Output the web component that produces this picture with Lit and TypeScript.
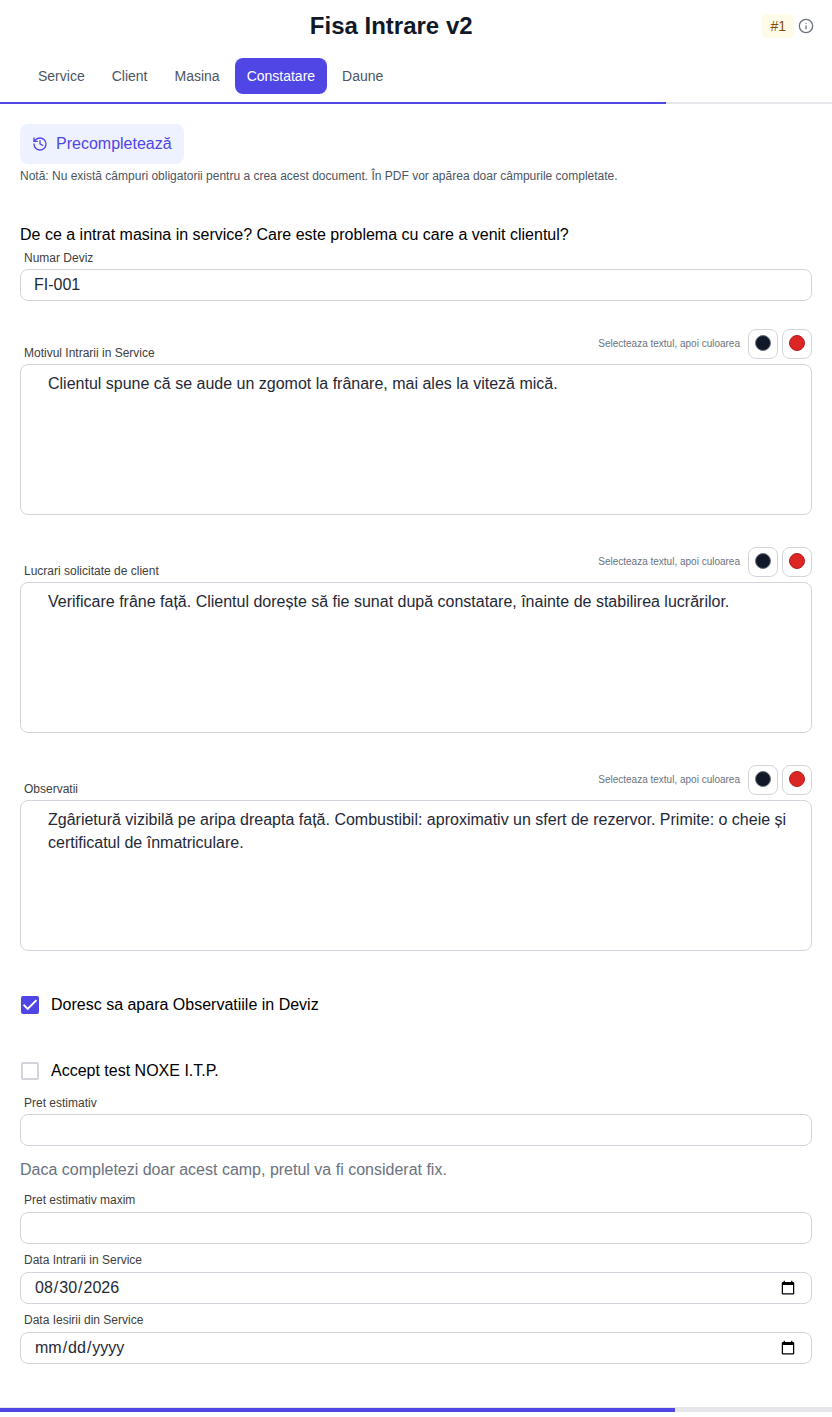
import { LitElement, html, css } from "lit";
import { customElement, property, state } from "lit/decorators.js";

@customElement("color-note")
class ColorNote extends LitElement {
  @property() label = "";
  @property() value = "";

  static styles = css`
    :host { display: block; }
    * { box-sizing: border-box; }
    .head { display: flex; justify-content: space-between; align-items: flex-end; }
    label { font-size: 12px; line-height: 16px; color: #404040; padding-left: 4px; margin-bottom: -2px; }
    .tools { display: flex; align-items: center; gap: 4px; }
    .hint { font-size: 10px; line-height: 16px; color: #6b7280; margin-right: 4px; }
    button { width: 30px; height: 30px; padding: 0 0 2px; display: grid; place-items: center; background: #fff; border: 1px solid #d1d5db; border-radius: 8px; }
    .dot { width: 16px; height: 16px; border-radius: 50%; border: 1px solid; }
    .dark { background: #111827; border-color: #6b7280; }
    .red { background: #dc2626; border-color: #b91c1c; }
    textarea { display: block; width: 100%; height: 151px; margin-top: 5px; padding: 7px 12px 7px 27px; border: 1px solid #d1d5db; border-radius: 8px; font: 16px/23px "Liberation Sans", Arial, sans-serif; color: #1f2937; resize: none; outline: none; background: #fff; }
  `;

  render() {
    return html`
      <div class="head">
        <label for="text">${this.label}</label>
        <div class="tools">
          <span class="hint">Selecteaza textul, apoi culoarea</span>
          <button type="button" aria-label="Negru"><span class="dot dark"></span></button>
          <button type="button" aria-label="Rosu"><span class="dot red"></span></button>
        </div>
      </div>
      <textarea id="text" .value=${this.value}></textarea>
    `;
  }
}

@customElement("app-root")
class AppRoot extends LitElement {
  @state() private active = "Constatare";
  private tabs = ["Service", "Client", "Masina", "Constatare", "Daune"];

  static styles = css`
    :host { display: block; background: #fff; color: #000; font-family: "Liberation Sans", Arial, sans-serif; font-size: 16px; line-height: 24px; }
    * { box-sizing: border-box; }
    header { display: grid; grid-template-columns: 1fr auto; align-items: center; height: 52px; padding: 0 18px 0 20px; }
    h1 { margin: 0; font-size: 24px; line-height: 32px; text-align: center; color: #111827; }
    .status { display: flex; align-items: center; gap: 4px; }
    .badge { padding: 2px 8px; border-radius: 4px; background: #fefce8; color: #854d0e; font-size: 14px; line-height: 20px; }
    .info { display: grid; padding: 0; border: 0; background: none; color: #6b7280; }
    nav { display: flex; gap: 3px; padding: 6px 26px 8px; }
    .tab { padding: 8px 12px; border: 0; border-radius: 8px; background: none; font: 14px/20px "Liberation Sans", Arial, sans-serif; color: #4b5563; }
    .tab.on { background: #4f46e5; color: #fff; }
    .bar { height: 2px; background: #e5e7eb; }
    .bar.thick { height: 5px; border-top: 1px solid #e5e7eb; }
    .fill { height: 100%; background: #4f46e5; }
    main { display: block; padding: 20px 20px 43px; }
    .prefill { display: inline-flex; align-items: center; gap: 8px; height: 40px; padding: 0 12px; border: 0; border-radius: 8px; background: #eef2ff; color: #4f46e5; font: 16px/24px "Liberation Sans", Arial, sans-serif; }
    .note { margin: 4px 0 0; font-size: 12px; line-height: 16px; color: #4b5563; }
    h2 { margin: 39px 0 3px; font-size: 16px; line-height: 24px; font-weight: 400; }
    .field { display: flex; flex-direction: column; gap: 3px; }
    .field label { padding-left: 4px; font-size: 12px; line-height: 16px; color: #404040; }
    .field input { width: 100%; height: 32px; padding: 0 13px; border: 1px solid #d1d5db; border-radius: 8px; background: #fff; color: #1f2937; font: 16px/24px "Liberation Sans", Arial, sans-serif; outline: none; }
    .notes { display: flex; flex-direction: column; gap: 32px; margin-top: 28px; }
    .check { display: flex; align-items: center; gap: 12px; height: 24px; }
    .check input { appearance: none; width: 18px; height: 18px; margin: 0 0 0 1px; border: 2px solid #d1d5db; border-radius: 2px; background: #fff; }
    .check input:checked { border-color: #4f46e5; background: #4f46e5 url("data:image/svg+xml,%3Csvg xmlns='http://www.w3.org/2000/svg' viewBox='0 0 18 18'%3E%3Cpath d='M2.5 8.7 6.7 12.9 15.5 4.1' fill='none' stroke='white' stroke-width='2'/%3E%3C/svg%3E") center / 18px 18px no-repeat border-box; }
    .checks { display: flex; flex-direction: column; gap: 42px; margin: 42px 0 12px; }
    .hint { margin: 12px 0 10px; color: #6b7280; }
    .stack { display: flex; flex-direction: column; gap: 8px; }
    .stack .field { gap: 4px; }
  `;

  private field(id: string, label: string, type = "text", value = "") {
    return html`<div class="field"><label for=${id}>${label}</label><input id=${id} type=${type} .value=${value} /></div>`;
  }

  render() {
    return html`
      <header>
        <h1>Fisa Intrare v2</h1>
        <div class="status">
          <span class="badge">#1</span>
          <button class="info" type="button" aria-label="Informatii">
            <svg width="16" height="16" viewBox="0 0 24 24" fill="none" stroke="currentColor" stroke-width="2" stroke-linecap="round"><circle cx="12" cy="12" r="10" /><path d="M12 16v-4M12 8h.01" /></svg>
          </button>
        </div>
      </header>
      <nav>
        ${this.tabs.map((t) => html`<button type="button" class="tab ${t === this.active ? "on" : ""}" @click=${() => (this.active = t)}>${t}</button>`)}
      </nav>
      <div class="bar"><div class="fill" style="width:80%"></div></div>
      <main>
        <button class="prefill" type="button">
          <svg width="16" height="16" viewBox="0 0 24 24" fill="none" stroke="currentColor" stroke-width="2" stroke-linecap="round" stroke-linejoin="round"><path d="M3 12a9 9 0 1 0 9-9 9.75 9.75 0 0 0-6.74 2.74L3 8" /><path d="M3 3v5h5M12 7v5l4 2" /></svg>
          Precompletează
        </button>
        <p class="note">Notă: Nu există câmpuri obligatorii pentru a crea acest document. În PDF vor apărea doar câmpurile completate.</p>
        <h2>De ce a intrat masina in service? Care este problema cu care a venit clientul?</h2>
        ${this.field("deviz", "Numar Deviz", "text", "FI-001")}
        <div class="notes">
          <color-note label="Motivul Intrarii in Service" value="Clientul spune că se aude un zgomot la frânare, mai ales la viteză mică."></color-note>
          <color-note label="Lucrari solicitate de client" value="Verificare frâne față. Clientul dorește să fie sunat după constatare, înainte de stabilirea lucrărilor."></color-note>
          <color-note label="Observatii" value="Zgârietură vizibilă pe aripa dreapta față. Combustibil: aproximativ un sfert de rezervor. Primite: o cheie și certificatul de înmatriculare."></color-note>
        </div>
        <div class="checks">
          <label class="check"><input type="checkbox" .checked=${true} />Doresc sa apara Observatiile in Deviz</label>
          <label class="check"><input type="checkbox" />Accept test NOXE I.T.P.</label>
        </div>
        ${this.field("pret", "Pret estimativ")}
        <p class="hint">Daca completezi doar acest camp, pretul va fi considerat fix.</p>
        <div class="stack">
          ${this.field("maxim", "Pret estimativ maxim")}
          ${this.field("intrare", "Data Intrarii in Service", "date", "2026-08-30")}
          ${this.field("iesire", "Data Iesirii din Service", "date")}
        </div>
      </main>
      <div class="bar thick"><div class="fill" style="width:81.1%"></div></div>
    `;
  }
}
